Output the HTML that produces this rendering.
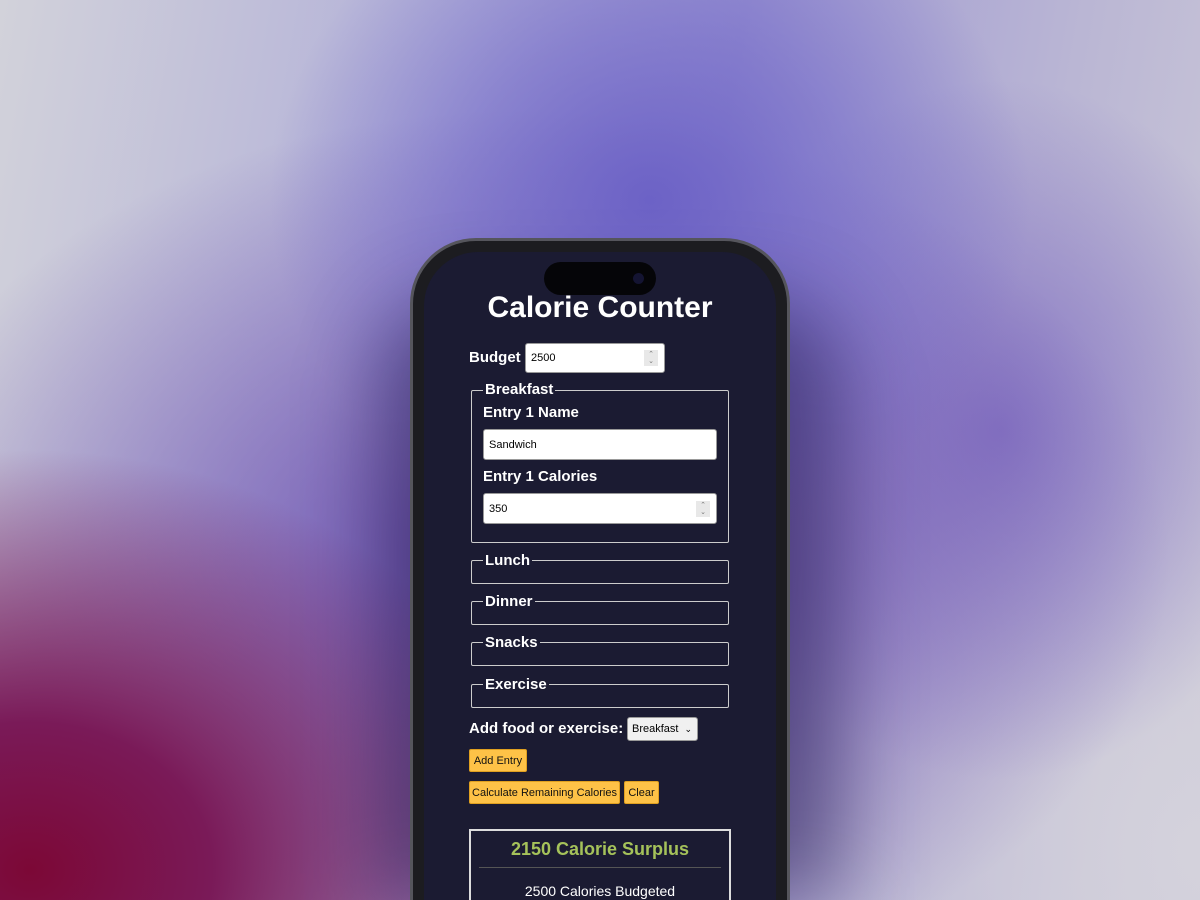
<!DOCTYPE html>
<html><head><meta charset="utf-8"><style>
*{box-sizing:border-box;margin:0;padding:0}
html,body{width:1200px;height:900px;overflow:hidden}
body{position:relative;font-family:"Liberation Sans",sans-serif;
background:
radial-gradient(ellipse 380px 340px at 650px 200px,#6c62c6 0%,rgba(110,100,200,0.55) 50%,rgba(110,100,200,0) 100%),
radial-gradient(ellipse 520px 420px at 30px 870px,#7c0836 0%,#7a1a58 35%,rgba(120,40,110,0) 100%),
radial-gradient(ellipse 650px 450px at 520px 560px,#6d50b0 0%,rgba(110,80,170,0) 100%),
radial-gradient(ellipse 300px 350px at 1000px 430px,rgba(120,100,190,0.8) 0%,rgba(120,100,190,0) 100%),
radial-gradient(ellipse 450px 550px at 1200px 850px,#d4d2dc 0%,rgba(212,210,220,0) 100%),
linear-gradient(100deg,#d2d2da 0%,#b0aed8 35%,#9e98d2 55%,#bab6d4 80%,#ccc9d8 100%);}
.shadow{position:absolute;left:380px;top:300px;width:460px;height:600px;border-radius:80px 80px 0 0;background:rgba(20,10,60,0.45);filter:blur(40px)}
.phone{position:absolute;left:410px;top:238px;width:380px;height:662px;border-radius:66px 66px 0 0;background:#1c1c20;border:3px solid #55555c;border-bottom:none}
.screen{position:absolute;left:424px;top:252px;width:352px;height:648px;border-radius:54px 54px 0 0;background:#1b1b32;overflow:hidden}
.island{position:absolute;left:544px;top:262px;width:112px;height:33px;border-radius:17px;background:#050508}
.cam{position:absolute;left:633px;top:273px;width:11px;height:11px;border-radius:50%;background:#141432}
.t{position:absolute;color:#fff;font-weight:bold;white-space:nowrap}
.inp{position:absolute;background:#fff;border:1px solid #999;border-radius:3px;font-size:11px;color:#000;padding-left:5px;display:flex;align-items:center}
.spin{position:absolute;right:6px;top:50%;transform:translateY(-50%);width:14px;height:16px;background:#e8e8e8;font-size:7px;color:#777;text-align:center;line-height:7px;padding-top:1px}
.fs{position:absolute;left:471px;width:258px;border:1px solid #ccc;border-radius:2px}
.lg{position:absolute;left:483px;color:#fff;font-weight:bold;font-size:15px;background:#1b1b32;padding:0 2px;line-height:16px}
.btn{position:absolute;background:#fec247;border:1px solid #e0a020;border-radius:2px;font-size:11px;color:#111;display:flex;align-items:center;justify-content:center}
</style></head><body>
<div class="shadow"></div>
<div class="phone"></div>
<div class="screen"></div>
<div class="island"></div><div class="cam"></div>
<div class="t" style="left:424px;width:352px;text-align:center;top:291px;font-size:30px">Calorie Counter</div>
<div class="t" style="left:469px;top:349px;font-size:15px">Budget</div>
<div class="inp" style="left:525px;top:343px;width:140px;height:30px">2500<div class="spin">⌃<br>⌄</div></div>
<div class="fs" style="top:390px;height:153px"></div>
<div class="lg" style="top:382px">Breakfast</div>
<div class="t" style="left:483px;top:404px;font-size:15px">Entry 1 Name</div>
<div class="inp" style="left:483px;top:429px;width:234px;height:31px">Sandwich</div>
<div class="t" style="left:483px;top:468px;font-size:15px">Entry 1 Calories</div>
<div class="inp" style="left:483px;top:493px;width:234px;height:31px">350<div class="spin">⌃<br>⌄</div></div>
<div class="fs" style="top:560px;height:24px"></div><div class="lg" style="top:553px">Lunch</div>
<div class="fs" style="top:601px;height:24px"></div><div class="lg" style="top:594px">Dinner</div>
<div class="fs" style="top:642px;height:24px"></div><div class="lg" style="top:635px">Snacks</div>
<div class="fs" style="top:684px;height:24px"></div><div class="lg" style="top:677px">Exercise</div>
<div class="t" style="left:469px;top:720px;font-size:15px">Add food or exercise:</div>
<div class="inp" style="left:627px;top:717px;width:71px;height:24px;background:#f0f0f0;font-size:11px;padding-left:4px">Breakfast<span style="position:absolute;right:5px;font-size:9px">⌄</span></div>
<div class="btn" style="left:469px;top:749px;width:58px;height:23px">Add Entry</div>
<div class="btn" style="left:469px;top:781px;width:151px;height:23px">Calculate Remaining Calories</div>
<div class="btn" style="left:624px;top:781px;width:35px;height:23px">Clear</div>
<div style="position:absolute;left:469px;top:829px;width:262px;height:71px;border:2px solid #ddd;border-bottom:none"></div>
<div class="t" style="left:469px;width:262px;text-align:center;top:839px;font-size:18px;color:#a5c25a">2150 Calorie Surplus</div>
<div style="position:absolute;left:479px;top:867px;width:242px;height:1px;background:#555"></div>
<div style="position:absolute;left:469px;width:262px;text-align:center;top:883px;font-size:14px;line-height:16px;color:#fff">2500 Calories Budgeted</div>
</body></html>
